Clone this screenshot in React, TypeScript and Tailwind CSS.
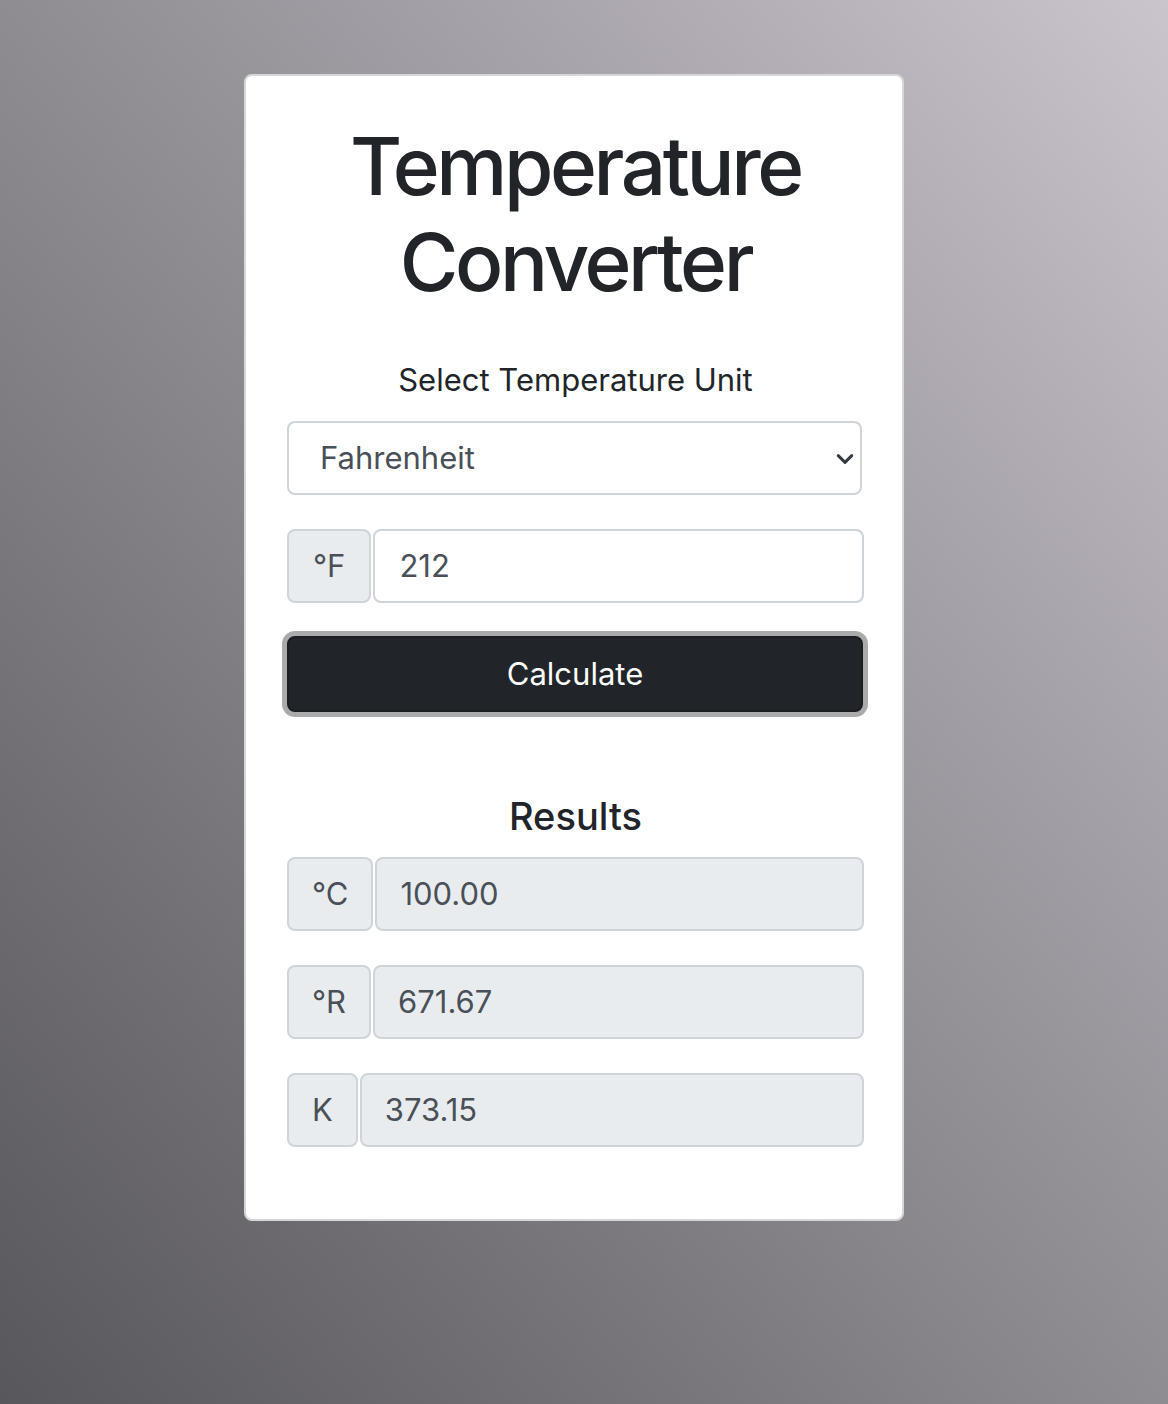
import React, { useState } from 'react';

// 단위 변환 결과 행 (읽기 전용)
function ResultRow({ unit, value }: { unit: string; value: string }) {
  return (
    <div className="flex h-[74px] gap-[2px] mb-[34px]">
      <span className="flex items-center px-[23px] bg-[#e9ecef] border-2 border-[#ced4da] rounded-[8px] text-[31px] text-[#495057]">
        {unit}
      </span>
      <input
        readOnly
        value={value}
        className="flex-1 min-w-0 px-[23px] bg-[#e9ecef] border-2 border-[#ced4da] rounded-[8px] text-[31px] text-[#495057] outline-none"
      />
    </div>
  );
}

export default function App() {
  const [unit, setUnit] = useState('F');
  const [input, setInput] = useState('212');
  const [result, setResult] = useState({ c: '100.00', r: '671.67', k: '373.15' });

  const calculate = () => {
    const v = parseFloat(input);
    if (isNaN(v)) return;
    let c = v;
    if (unit === 'F') c = (v - 32) * 5 / 9;
    if (unit === 'K') c = v - 273.15;
    if (unit === 'R') c = (v - 491.67) * 5 / 9;
    setResult({
      c: c.toFixed(2),
      r: ((c + 273.15) * 9 / 5).toFixed(2),
      k: (c + 273.15).toFixed(2),
    });
  };

  return (
    <div className="min-h-[1404px] bg-linear-to-tr from-[#58575c] to-[#cac4cc] pl-[244px] pt-[74px] font-['Inter',sans-serif]">
      <div className="w-[660px] bg-white border-2 border-[#d6d6d8] rounded-[8px] pl-[41px] pr-[38px] pt-[42px] pb-[38px] flex flex-col">
        <h1 className="text-center text-[80px] leading-[96px] font-medium text-[#212529] tracking-[-3.4px]">
          Temperature
          <br />
          Converter
        </h1>

        <label className="mt-[46px] text-center text-[31px] leading-[48px] text-[#212529]">
          Select Temperature Unit
        </label>

        <div className="relative mt-[17px] mr-[2px]">
          <select
            value={unit}
            onChange={e => setUnit(e.target.value)}
            className="w-full h-[74px] appearance-none bg-white border-2 border-[#ced4da] rounded-[8px] pl-[31px] text-[31px] text-[#495057] outline-none"
          >
            <option value="F">Fahrenheit</option>
            <option value="C">Celsius</option>
            <option value="K">Kelvin</option>
            <option value="R">Rankine</option>
          </select>
          <svg
            className="absolute right-[8px] top-[29px] pointer-events-none"
            width="18"
            height="18"
            viewBox="0 0 16 16"
          >
            <path d="M2 5l6 6 6-6" fill="none" stroke="#343a40" strokeWidth="2.6" strokeLinecap="round" strokeLinejoin="round" />
          </svg>
        </div>

        <div className="flex h-[74px] gap-[2px] mt-[34px]">
          <span className="flex items-center px-[24px] bg-[#e9ecef] border-2 border-[#ced4da] rounded-[8px] text-[31px] text-[#495057]">
            °F
          </span>
          <input
            value={input}
            onChange={e => setInput(e.target.value)}
            className="flex-1 min-w-0 px-[24px] bg-white border-2 border-[#ced4da] rounded-[8px] text-[31px] text-[#495057] outline-none"
          />
        </div>

        <button
          onClick={calculate}
          className="mt-[33px] mr-[1px] h-[76px] bg-[#212529] border-2 border-[#1a1d20] rounded-[8px] text-white text-[31px] ring-[5px] ring-[#a9aaac]"
        >
          Calculate
        </button>

        <h5 className="mt-[80px] mb-[17px] text-center text-[38px] leading-[48px] font-medium text-[#212529]">
          Results
        </h5>

        <ResultRow unit="°C" value={result.c} />
        <ResultRow unit="°R" value={result.r} />
        <ResultRow unit="K" value={result.k} />
      </div>
    </div>
  );
}
